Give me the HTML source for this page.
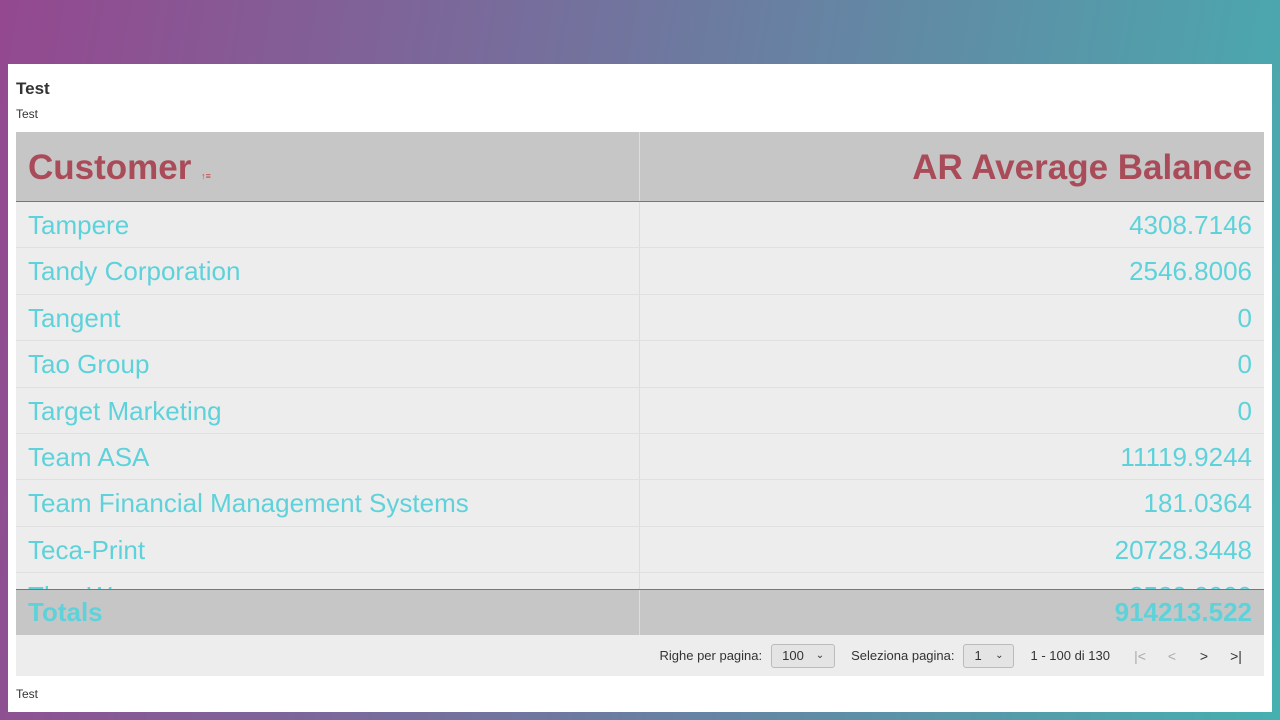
<!DOCTYPE html>
<html><head><style>
*{margin:0;padding:0;box-sizing:border-box}
body{width:1280px;height:720px;overflow:hidden;font-family:"Liberation Sans",sans-serif;background:linear-gradient(100deg,#94488f 0%,#6d7aa0 50%,#45b0b0 100%)}
.panel{position:absolute;left:8px;top:64px;width:1264px;height:648px;background:#fff}
.t1{position:absolute;left:8px;top:15px;font-size:17px;font-weight:bold;color:#333}
.t2{position:absolute;left:8px;top:43px;font-size:12px;color:#333}
.t3{position:absolute;left:8px;top:623px;font-size:12px;color:#333}
.tbl{position:absolute;left:8px;top:68px;width:1248px}
.hdr{height:70px;background:#c6c6c6;border-bottom:1px solid #777;display:flex;color:#a94b58;font-size:35px;font-weight:bold}
.hdr div{padding:16px 12px 0}
.c1{width:624px;border-right:1px solid #ddd;position:relative}
.c2{flex:1;text-align:right}
.body{height:387px;overflow:hidden;background:#ededed}
.row{height:46.4px;display:flex;border-bottom:1px solid #e0e0e0;color:#5ed2da;font-size:26px;line-height:47px}
.row div{padding:0 12px;white-space:nowrap}
.tot{height:46px;background:#c6c6c6;border-top:1px solid #777;display:flex;color:#5ed2da;font-size:26px;font-weight:bold;line-height:44px}
.tot div{padding:0 12px}
.pag{height:41px;background:#ededed;display:flex;align-items:center;justify-content:flex-end;font-size:13px;color:#333;padding-right:12px}
.sel{border:1px solid #bbb;border-radius:3px;background:#e4e4e4;height:24px;padding:0 10px;display:flex;align-items:center;justify-content:space-between;margin:0 16px 0 9px}
.ic{width:32px;text-align:center;font-size:14px}
</style></head><body>
<div class="panel">
<div class="t1">Test</div>
<div class="t2">Test</div>
<div class="tbl">
<div class="hdr"><div class="c1">Customer <span style="font-size:9px;color:#c44">↑≡</span></div><div class="c2">AR Average Balance</div></div>
<div class="body">
<div class="row"><div class="c1">Tampere</div><div class="c2">4308.7146</div></div>
<div class="row"><div class="c1">Tandy Corporation</div><div class="c2">2546.8006</div></div>
<div class="row"><div class="c1">Tangent</div><div class="c2">0</div></div>
<div class="row"><div class="c1">Tao Group</div><div class="c2">0</div></div>
<div class="row"><div class="c1">Target Marketing</div><div class="c2">0</div></div>
<div class="row"><div class="c1">Team ASA</div><div class="c2">11119.9244</div></div>
<div class="row"><div class="c1">Team Financial Management Systems</div><div class="c2">181.0364</div></div>
<div class="row"><div class="c1">Teca-Print</div><div class="c2">20728.3448</div></div>
<div class="row"><div class="c1">TheoWare</div><div class="c2">2529.0000</div></div>
</div>
<div class="tot"><div class="c1" style="border-right:1px solid #ddd">Totals</div><div class="c2">914213.522</div></div>
<div class="pag">Righe per pagina:<div class="sel" style="width:64px">100 <span style="font-size:10px">⌄</span></div>Seleziona pagina:<div class="sel" style="width:51px">1 <span style="font-size:10px">⌄</span></div><span style="margin-right:14px">1 - 100 di 130</span><span class="ic" style="color:#aaa">|&lt;</span><span class="ic" style="color:#aaa">&lt;</span><span class="ic">&gt;</span><span class="ic">&gt;|</span></div>
</div>
<div class="t3">Test</div>
</div>
</body></html>
